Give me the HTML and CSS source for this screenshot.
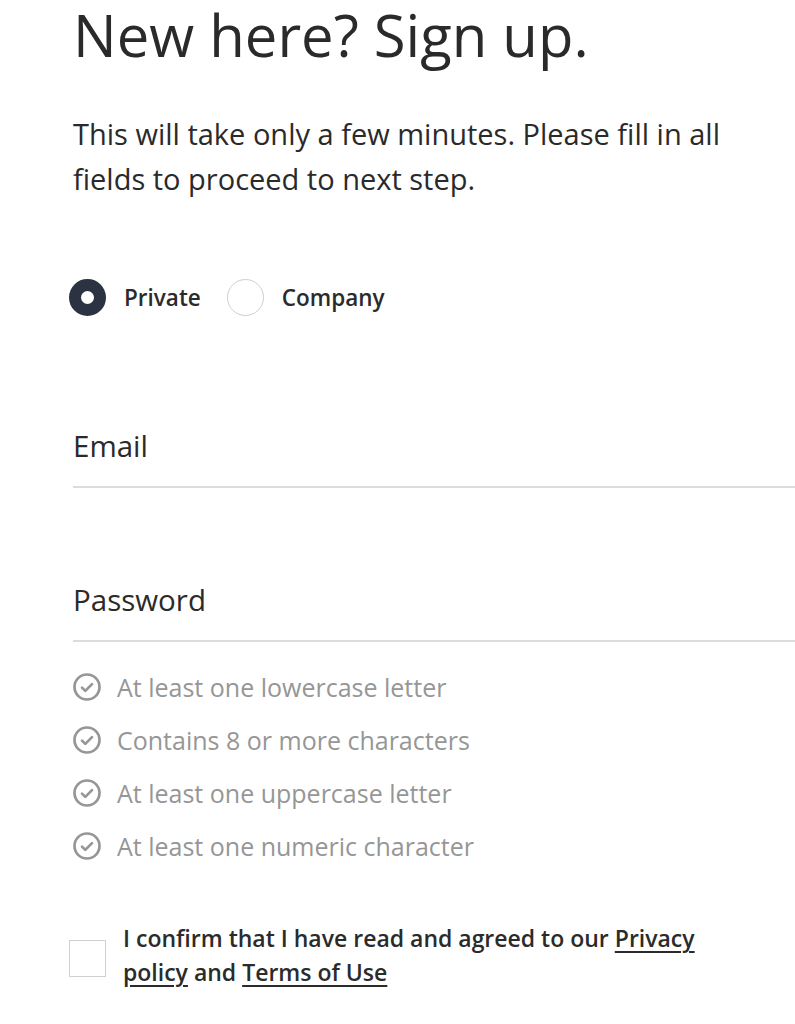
FILE: index.html
```html
<!DOCTYPE html>
<html lang="en">
<head>
<meta charset="utf-8">
<title>Sign up</title>
<link rel="stylesheet" href="styles.css">
</head>
<body>
<main class="signup">
  <h1 class="signup-title">New here? Sign up.</h1>
  <p class="signup-intro">This will take only a few minutes. Please fill in all fields to proceed to next step.</p>

  <div class="account-type">
    <label class="radio">
      <span class="radio-dot is-checked"></span>
      <span class="radio-label">Private</span>
    </label>
    <label class="radio">
      <span class="radio-dot"></span>
      <span class="radio-label">Company</span>
    </label>
  </div>

  <div class="field field-email">
    <span class="field-label">Email</span>
  </div>
  <div class="field field-password">
    <span class="field-label">Password</span>
  </div>

  <ul class="rules">
    <li class="rule">
      <svg class="rule-icon" viewBox="0 0 28 28"><circle cx="14" cy="14" r="12.5"/><path d="M9 14.6l3.3 3.3 6.7-6.8"/></svg>
      <span>At least one lowercase letter</span>
    </li>
    <li class="rule">
      <svg class="rule-icon" viewBox="0 0 28 28"><circle cx="14" cy="14" r="12.5"/><path d="M9 14.6l3.3 3.3 6.7-6.8"/></svg>
      <span>Contains 8 or more characters</span>
    </li>
    <li class="rule">
      <svg class="rule-icon" viewBox="0 0 28 28"><circle cx="14" cy="14" r="12.5"/><path d="M9 14.6l3.3 3.3 6.7-6.8"/></svg>
      <span>At least one uppercase letter</span>
    </li>
    <li class="rule">
      <svg class="rule-icon" viewBox="0 0 28 28"><circle cx="14" cy="14" r="12.5"/><path d="M9 14.6l3.3 3.3 6.7-6.8"/></svg>
      <span>At least one numeric character</span>
    </li>
  </ul>

  <label class="consent">
    <span class="checkbox"></span>
    <span class="consent-text">I confirm that I have read and agreed to our <a href="#">Privacy policy</a> and <a href="#">Terms of Use</a></span>
  </label>
</main>
</body>
</html>
```
FILE: styles.css
```css
html, body {
  margin: 0;
  padding: 0;
  background: #ffffff;
}

body {
  font-family: "Open Sans", "Lato", sans-serif;
  color: #2b2b2b;
}

.signup {
  padding: 0 0 0 73px;
}

.signup-title {
  margin: 0;
  font-size: 58px;
  font-weight: 500;
  line-height: 70px;
  color: #2a2a2a;
}

.signup-intro {
  margin: 41px 0 0;
  max-width: 680px;
  font-size: 29px;
  line-height: 45px;
  font-weight: 500;
  color: #2a2a2a;
}

.account-type {
  display: flex;
  align-items: center;
  gap: 26px;
  margin-top: 78px;
  margin-left: -4px;
}

.radio {
  display: flex;
  align-items: center;
  gap: 18px;
}

.radio-dot {
  flex: none;
  box-sizing: border-box;
  width: 37px;
  height: 37px;
  border-radius: 50%;
  border: 1.5px solid #cfcfcf;
  background: #fff;
}

.radio-dot.is-checked {
  border: 12px solid #2b3343;
  background: #fff;
}

.radio-label {
  font-size: 22.5px;
  font-weight: 600;
  color: #2b2b2b;
}

.field {
  height: 154px;
  box-sizing: border-box;
  border-bottom: 2px solid #dcdcdc;
  display: flex;
  align-items: flex-end;
  padding-bottom: 24px;
}

.field-email {
  height: 172px;
}

.field-label {
  font-size: 29.5px;
  font-weight: 500;
  color: #2a2a2a;
  line-height: 32px;
}

.rules {
  list-style: none;
  margin: 29px 0 0;
  padding: 0;
  display: flex;
  flex-direction: column;
  gap: 21px;
}

.rule {
  display: flex;
  align-items: center;
  gap: 16px;
  font-size: 25px;
  line-height: 32px;
  font-weight: 500;
  color: #969696;
}

.rule-icon {
  width: 28px;
  height: 28px;
  flex: none;
  fill: none;
  stroke: #969696;
  stroke-width: 2.7;
  stroke-linecap: round;
  stroke-linejoin: round;
}

.consent {
  display: flex;
  align-items: flex-start;
  gap: 17px;
  margin-top: 59px;
  margin-left: -4px;
}

.checkbox {
  flex: none;
  box-sizing: border-box;
  width: 37px;
  height: 37px;
  margin-top: 19px;
  border: 1.5px solid #d0d0d0;
  background: #fff;
}

.consent-text {
  max-width: 600px;
  font-size: 23px;
  line-height: 34px;
  font-weight: 600;
  color: #2b2b2b;
}

.consent-text a {
  color: inherit;
  text-decoration: underline;
  text-underline-offset: 4px;
  text-decoration-thickness: 1.5px;
}
```
